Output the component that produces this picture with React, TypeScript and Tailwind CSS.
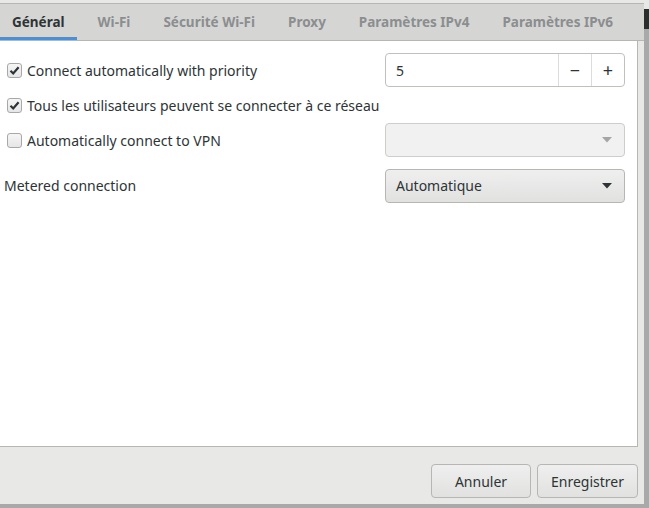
import { useState } from 'react';

const font = { fontFamily: '"Noto Sans", "Open Sans", sans-serif' };

const tabs = ['Général', 'Wi-Fi', 'Sécurité Wi-Fi', 'Proxy', 'Paramètres IPv4', 'Paramètres IPv6'];

function Check({ checked }: { checked: boolean }) {
  return (
    <span className="flex h-[15px] w-[15px] shrink-0 items-center justify-center rounded-[3px] border border-[#a8a8a6] bg-gradient-to-b from-[#f6f6f6] to-[#e6e6e6]">
      {checked && (
        <svg width="11" height="11" viewBox="0 0 11 11">
          <path d="M1.5 5.8 L4.2 8.5 L9.6 2.2" fill="none" stroke="#2e3436" strokeWidth="2.2" />
        </svg>
      )}
    </span>
  );
}

function Arrow({ color }: { color: string }) {
  return (
    <svg width="10" height="6" viewBox="0 0 10 6">
      <path d="M0 0 L10 0 L5 5.5 Z" fill={color} />
    </svg>
  );
}

export default function App() {
  const [active] = useState(0);
  const [priority, setPriority] = useState(5);

  return (
    <div className="flex h-[508px] w-[649px] bg-[#a9a9a9] text-[14px] text-[#2e3436]" style={font}>
      <div className="flex h-[504px] w-[644px] shrink-0 flex-col bg-[#e8e8e7]">
        <div className="h-[4px] shrink-0 border-b border-[#b6b6b3]" />
        <div className="flex h-[37px] shrink-0 gap-[9px] overflow-hidden border-b border-[#b6b6b3] bg-[#d5d5d4] pr-[6px] text-[13.5px]">
          {tabs.map((t, i) => (
            <div
              key={t}
              className={
                i === active
                  ? 'flex shrink-0 items-center whitespace-nowrap border-b-[3px] border-[#4a90d9] px-3 pt-[3px] font-bold text-[#2e3436]'
                  : 'flex shrink-0 items-center whitespace-nowrap px-3 font-bold text-[#8b8e8f]'
              }
            >
              {t}
            </div>
          ))}
        </div>
        <div className="flex w-[638px] flex-1 flex-col border-r border-b border-[#b6b6b3] bg-white pr-[12px] pt-[12px]">
          <div className="flex h-[34px] items-center justify-between">
            <label className="flex items-center gap-[5px] pl-[7px]">
              <Check checked />
              <span>Connect automatically with priority</span>
            </label>
            <div className="flex h-[34px] w-[240px] overflow-hidden rounded-[4px] border border-[#c0c0bd] bg-white">
              <span className="flex flex-1 items-center pl-[10px]">{priority}</span>
              <button
                onClick={() => setPriority(priority - 1)}
                className="flex w-[33px] items-center justify-center border-l border-[#dcdcda] text-[18px]"
              >
                −
              </button>
              <button
                onClick={() => setPriority(priority + 1)}
                className="flex w-[33px] items-center justify-center border-l border-[#dcdcda] text-[18px]"
              >
                +
              </button>
            </div>
          </div>
          <div className="mt-[1px] flex h-[34px] items-center">
            <label className="flex items-center gap-[5px] pl-[7px]">
              <Check checked />
              <span>Tous les utilisateurs peuvent se connecter à ce réseau</span>
            </label>
          </div>
          <div className="mt-[1px] flex h-[34px] items-center justify-between">
            <label className="flex items-center gap-[5px] pl-[7px]">
              <Check checked={false} />
              <span>Automatically connect to VPN</span>
            </label>
            <div className="flex h-[34px] w-[240px] items-center justify-end rounded-[4px] border border-[#cdcdcb] bg-[#f1f1f1] pr-[12px]">
              <Arrow color="#a4a6a6" />
            </div>
          </div>
          <div className="mt-[12px] flex h-[34px] items-center justify-between">
            <span className="pl-[4px] pb-[1px]">Metered connection</span>
            <div className="flex h-[34px] w-[240px] items-center justify-between rounded-[4px] border border-[#b6b6b3] bg-gradient-to-b from-[#efefef] to-[#e1e1e0] pr-[12px] pl-[10px]">
              <span className="pb-[1px]">Automatique</span>
              <Arrow color="#2e3436" />
            </div>
          </div>
        </div>
        <div className="flex h-[57px] shrink-0 items-start justify-end gap-[6px] pr-[6px] pt-[17px]">
          <button className="h-[34px] w-[100px] rounded-[4px] border border-[#b6b6b3] bg-gradient-to-b from-[#efefef] to-[#e1e1e0]">
            Annuler
          </button>
          <button className="h-[34px] w-[101px] rounded-[4px] border border-[#b6b6b3] bg-gradient-to-b from-[#efefef] to-[#e1e1e0]">
            Enregistrer
          </button>
        </div>
      </div>
      <div className="flex flex-col">
        <div className="h-[9px] w-[5px] bg-[#e8e8e7]" />
        <div className="h-[20px] w-[5px] bg-[#2d2d2d]" />
      </div>
    </div>
  );
}
